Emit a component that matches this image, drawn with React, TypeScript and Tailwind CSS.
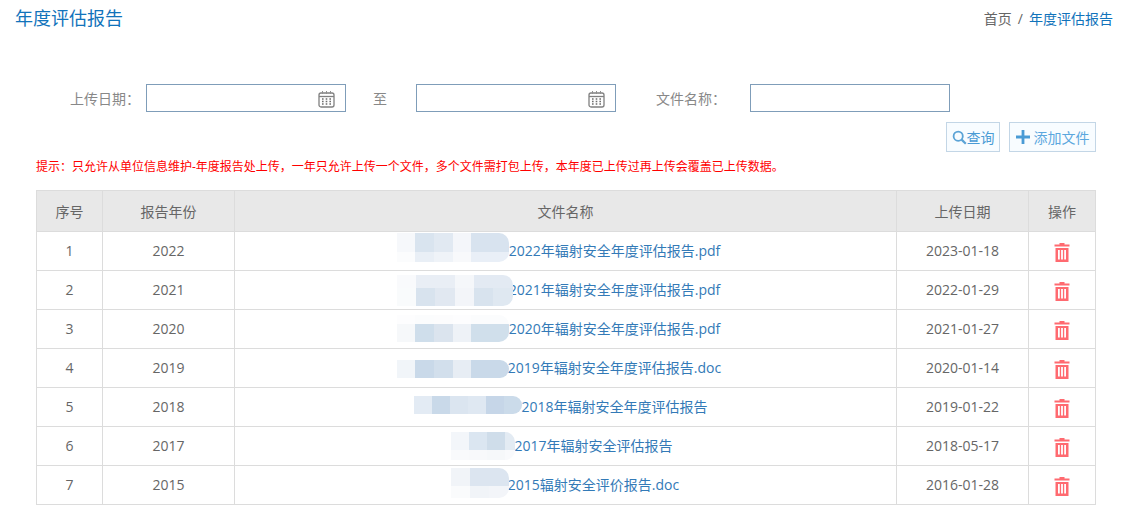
import React from "react";

interface Row {
  no: number;
  year: number;
  file: string;
  date: string;
  prefix: number;
  blur: { left: number; top: number; width: number; tiles: string[][]; heights: number[] };
}

// prefix = width of the blurred part of the file name, blur.left = where the tiles start inside it
const rows: Row[] = [
  {
    no: 1, year: 2022, file: "2022年辐射安全年度评估报告.pdf", date: "2023-01-18", prefix: 98,
    blur: { left: -14, top: 1, width: 112, heights: [19, 10], tiles: [
      ["#f6f8fb", "#d9e4ef", "#e1e9f2", "#f4f6fa", "#d8e3ef", "#d8e3ef"],
      ["#fbfcfd", "#e9eff6", "#eff3f8", "#f8f9fb", "#e9eff7", "#e9eff7"],
    ] },
  },
  {
    no: 2, year: 2021, file: "2021年辐射安全年度评估报告.pdf", date: "2022-01-29", prefix: 98,
    blur: { left: -14, top: 4, width: 116, heights: [13, 18], tiles: [
      ["#f9fafc", "#e9eef5", "#e9eef5", "#f5f7fa", "#e3eaf3", "#e3eaf3"],
      ["#f9fbfc", "#d8e3ee", "#e1e8f1", "#f3f5f9", "#d8e3ee", "#dfe8f1"],
    ] },
  },
  {
    no: 3, year: 2020, file: "2020年辐射安全年度评估报告.pdf", date: "2021-01-27", prefix: 98,
    blur: { left: -14, top: 5, width: 112, heights: [9, 18], tiles: [
      ["#fdfdfe", "#fbfcfd", "#fcfcfd", "#fdfdfe", "#fbfcfd", "#fbfcfd"],
      ["#f6f8fa", "#cfdeeb", "#dbe4ee", "#eef2f7", "#d0dfeb", "#d0dfeb"],
    ] },
  },
  {
    no: 4, year: 2019, file: "2019年辐射安全年度评估报告.doc", date: "2020-01-14", prefix: 98,
    blur: { left: -13, top: 11, width: 112, heights: [18], tiles: [
      ["#f1f5f9", "#c9d9e9", "#d2dfec", "#e7edf4", "#c9d9e9", "#c9d9e9"],
    ] },
  },
  {
    no: 5, year: 2018, file: "2018年辐射安全年度评估报告", date: "2019-01-22", prefix: 98,
    blur: { left: -9, top: 8, width: 108, heights: [18], tiles: [
      ["#e3ebf4", "#c9d9e9", "#dbe5f0", "#dfe8f2", "#c6d6e8", "#cbdbea"],
    ] },
  },
  {
    no: 6, year: 2017, file: "2017年辐射安全评估报告", date: "2018-05-17", prefix: 56,
    blur: { left: -7, top: 5, width: 64, heights: [18, 10], tiles: [
      ["#f3f6fa", "#dbe6f1", "#cfddea", "#e3ebf3"],
      ["#f9fafc", "#f8f9fb", "#f6f8fa", "#f9fafc"],
    ] },
  },
  {
    no: 7, year: 2015, file: "2015辐射安全评价报告.doc", date: "2016-01-28", prefix: 56,
    blur: { left: -1, top: 2, width: 58, heights: [18, 12], tiles: [
      ["#f1f4f8", "#dce5f0", "#dce5f0"],
      ["#fafbfc", "#f1f4f8", "#f3f5f9"],
    ] },
  },
];

const notice =
  "提示\uFF1A只允许从单位信息维护-年度报告处上传\uFF0C一年只允许上传一个文件\uFF0C多个文件需打包上传\uFF0C本年度已上传过再上传会覆盖已上传数据\u3002";

function CalendarIcon() {
  return (
    <svg width="17" height="18" viewBox="0 0 17 18" fill="none" className="absolute right-[10px] top-[5px]">
      <rect x="1" y="3" width="15" height="14" rx="2" stroke="#808080" strokeWidth="1.3" />
      <path d="M1 6.5h15" stroke="#808080" strokeWidth="1.3" />
      <path d="M4.5 1v3M8.5 1v3M12.5 1v3" stroke="#909090" strokeWidth="1" />
      <path d="M4 9h1.6M7.7 9h1.6M11.4 9h1.6M4 11.5h1.6M7.7 11.5h1.6M11.4 11.5h1.6M4 14h1.6M7.7 14h1.6M11.4 14h1.6" stroke="#6e6e6e" strokeWidth="1.3" />
    </svg>
  );
}

function TrashIcon() {
  return (
    <svg width="16" height="19" viewBox="0 0 16 19" className="mx-auto mt-[3px] block">
      <path d="M5.5 0h5v1.6h5V3.6H.5V1.6h5z" fill="#ff6a70" />
      <path fillRule="evenodd" d="M1.5 5h13v14h-13zM4 7v9.5h1.8V7zM7.1 7v9.5h1.8V7zM10.2 7v9.5H12V7z" fill="#ff6a70" />
    </svg>
  );
}

function DateInput() {
  return (
    <div className="relative h-[28px] w-[200px] border border-[#7f9db9] bg-white">
      <CalendarIcon />
    </div>
  );
}

function Mosaic({ blur }: { blur: Row["blur"] }) {
  return (
    <span
      className="absolute flex flex-col overflow-hidden rounded-r-[10px]"
      style={{ left: blur.left, top: blur.top - 8, width: blur.width }}
    >
      {blur.tiles.map((line, i) => (
        <span key={i} className="flex" style={{ height: blur.heights[i] }}>
          {line.map((c, j) => (
            <span key={j} className="w-[18px] shrink-0 grow" style={{ backgroundColor: c }} />
          ))}
        </span>
      ))}
    </span>
  );
}

const th = "border border-[#dcdcdc] font-normal";
const td = "h-[39px] border border-[#dcdcdc] pb-[2px] text-center";

export default function App() {
  return (
    <div
      className="h-[509px] w-[1137px] overflow-hidden bg-white text-[14px] text-[#666]"
      style={{ fontFamily: '"Open Sans", "Noto Sans CJK SC", sans-serif' }}
    >
      <div className="flex h-[36px] items-center justify-between pl-[15px] pr-[24px]">
        <h1 className="text-[18px] leading-[36px] font-normal text-[#1173bb]">年度评估报告</h1>
        <div className="flex items-center">
          <span className="text-[#666]">首页</span>
          <span className="mx-[6px] text-[#666]">/</span>
          <span className="text-[#1173bb]">年度评估报告</span>
        </div>
      </div>

      <div className="mt-[48px] flex h-[28px] items-center pl-[70px] text-[#888]">
        <span className="w-[76px] whitespace-nowrap">{"上传日期\uFF1A"}</span>
        <DateInput />
        <span className="ml-[27px] w-[43px]">至</span>
        <DateInput />
        <span className="ml-[40px] w-[94px] whitespace-nowrap">{"文件名称\uFF1A"}</span>
        <div className="h-[28px] w-[200px] border border-[#7f9db9] bg-white" />
      </div>

      <div className="mt-[10px] flex justify-end gap-[9px] pr-[41px]">
        <button className="flex h-[30px] w-[54px] items-center justify-center border border-[#c3d6e6] bg-[#f8fcff] text-[#4a9bd5]">
          <svg width="15" height="15" viewBox="0 0 15 15" fill="none" className="shrink-0">
            <circle cx="6.2" cy="6.2" r="4.6" stroke="#5ba3d6" strokeWidth="1.8" />
            <path d="M9.6 9.6 13.8 13.8" stroke="#5ba3d6" strokeWidth="2.2" />
          </svg>
          查询
        </button>
        <button className="flex h-[30px] w-[87px] items-center justify-center gap-[4px] border border-[#c3d6e6] bg-[#f8fcff] text-[#5ba7de]">
          <svg width="14" height="14" viewBox="0 0 14 14" className="shrink-0">
            <path d="M5.6 0h2.8v5.6H14v2.8H8.4V14H5.6V8.4H0V5.6h5.6z" fill="#4a9bd5" />
          </svg>
          添加文件
        </button>
      </div>

      <p className="mt-[6px] ml-[36px] h-[18px] text-[12px] leading-[18px] whitespace-nowrap text-[#ff0000]">
        {notice}
      </p>

      <table className="mt-[14px] ml-[36px] w-[1059px] table-fixed border-collapse">
        <colgroup>
          <col className="w-[66px]" />
          <col className="w-[132px]" />
          <col className="w-[662px]" />
          <col className="w-[132px]" />
          <col className="w-[67px]" />
        </colgroup>
        <thead>
          <tr className="h-[41px] bg-[#e8e8e8]">
            <th className={th}>序号</th>
            <th className={th}>报告年份</th>
            <th className={th}>文件名称</th>
            <th className={th}>上传日期</th>
            <th className={th}>操作</th>
          </tr>
        </thead>
        <tbody>
          {rows.map((r) => (
            <tr key={r.no}>
              <td className={td}>{r.no}</td>
              <td className={td}>{r.year}</td>
              <td className={td}>
                <span className="relative inline-block align-top" style={{ width: r.prefix, height: 1 }}>
                  <Mosaic blur={r.blur} />
                </span>
                <span className="text-[#337ab7]">{r.file}</span>
              </td>
              <td className={td}>{r.date}</td>
              <td className="h-[39px] border border-[#dcdcdc] p-0 text-center">
                <TrashIcon />
              </td>
            </tr>
          ))}
        </tbody>
      </table>
    </div>
  );
}
